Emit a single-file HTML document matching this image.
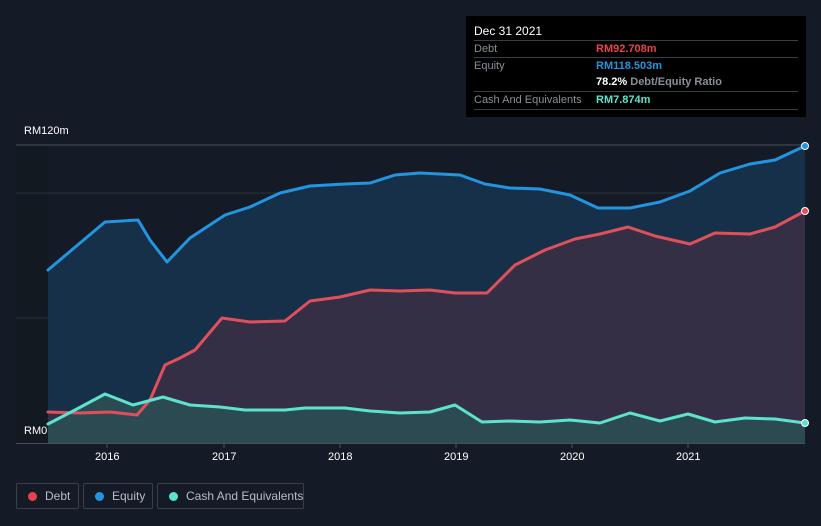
<!DOCTYPE html>
<html><head><style>
body{margin:0;width:821px;height:526px;background:#151b26;font-family:"Liberation Sans",sans-serif;overflow:hidden;position:relative}
.tt{position:absolute;left:466px;top:16px;width:340px;height:101px;background:#000}
.tt .h{position:absolute;left:8px;top:8px;color:#fff;font-size:12px}
.row{position:absolute;left:8px;width:324px;border-top:1px solid #3a3d44;height:17px;font-size:11px;color:#8a8f98;white-space:nowrap}
.row span{position:absolute;left:122px;top:2px;font-weight:bold}
.row .l{position:absolute;left:0;top:2px}
.lg{position:absolute;top:483px;height:26px;border:1px solid #3a3f4a;border-radius:2px;color:#b8bcc4;font-size:12px;line-height:24px;box-sizing:border-box;white-space:nowrap}
.lg i{position:absolute;left:11px;top:8px;width:9px;height:9px;border-radius:50%}
.ax{position:absolute;color:#fff;font-size:11px}
</style></head><body>
<svg width="821" height="526" style="position:absolute;left:0;top:0">
<rect x="16" y="145" width="32" height="298" fill="#131920"/>
<line x1="16" y1="145" x2="805" y2="145" fill="none" stroke="#4a505a" stroke-width="1"/>
<line x1="16" y1="193" x2="805" y2="193" stroke="#2a303a"/>
<line x1="16" y1="318" x2="805" y2="318" stroke="#2a303a"/>
<path d="M48,270 L80,243 105,222 138,220 150,240 167,262 190,238 225,215 250,207 280,193 310,186 345,184 370,183 395,175 420,173 460,175 485,184 510,188 540,189 570,195 598,208 630,208 660,202 690,191 720,173 750,164 775,160 805,146 L805,443 L48,443Z" fill="#17304a"/>
<path d="M48,412 L80,413 110,412 137,415 150,400 165,365 180,358 195,350 222,318 250,322 285,321 310,301 340,297 370,290 400,291 430,290 455,293 487,293 515,265 545,250 575,239 600,234 628,227 655,236 690,244 715,233 750,234 775,227 805,211 L805,443 L48,443Z" fill="#352f45"/>
<path d="M48,424 L75,410 105,394 133,405 163,397 190,405 220,407 245,410 285,410 305,408 345,408 370,411 400,413 430,412 455,405 482,422 510,421 540,422 570,420 600,423 630,413 660,421 688,414 715,422 745,418 775,419 805,423 L805,443 L48,443Z" fill="#2c4a52"/>
<g fill="none" stroke-width="3" stroke-linejoin="round" stroke-linecap="round">
<polyline stroke="#2394df" points="48,270 80,243 105,222 138,220 150,240 167,262 190,238 225,215 250,207 280,193 310,186 345,184 370,183 395,175 420,173 460,175 485,184 510,188 540,189 570,195 598,208 630,208 660,202 690,191 720,173 750,164 775,160 805,146"/>
<polyline stroke="#e0505c" points="48,412 80,413 110,412 137,415 150,400 165,365 180,358 195,350 222,318 250,322 285,321 310,301 340,297 370,290 400,291 430,290 455,293 487,293 515,265 545,250 575,239 600,234 628,227 655,236 690,244 715,233 750,234 775,227 805,211"/>
<polyline stroke="#5de3cd" points="48,424 75,410 105,394 133,405 163,397 190,405 220,407 245,410 285,410 305,408 345,408 370,411 400,413 430,412 455,405 482,422 510,421 540,422 570,420 600,423 630,413 660,421 688,414 715,422 745,418 775,419 805,423"/>
</g>
<line x1="16" y1="443.5" x2="805" y2="443.5" stroke="#4a505a"/>
<g stroke="#4a505a"><line x1="107" y1="443" x2="107" y2="448"/><line x1="224" y1="443" x2="224" y2="448"/><line x1="340" y1="443" x2="340" y2="448"/><line x1="456" y1="443" x2="456" y2="448"/><line x1="572" y1="443" x2="572" y2="448"/><line x1="688" y1="443" x2="688" y2="448"/></g>
<circle cx="805" cy="146" r="3.5" fill="#2394df" stroke="#fff" stroke-width="1"/>
<circle cx="805" cy="211" r="3.5" fill="#e0505c" stroke="#fff" stroke-width="1"/>
<circle cx="805" cy="423" r="3.5" fill="#5de3cd" stroke="#fff" stroke-width="1"/>
</svg>
<div class="ax" style="left:24px;top:125px">RM120m</div>
<div class="ax" style="left:24px;top:425px">RM0</div>
<div class="ax" style="left:95px;top:451px">2016</div>
<div class="ax" style="left:212px;top:451px">2017</div>
<div class="ax" style="left:328px;top:451px">2018</div>
<div class="ax" style="left:444px;top:451px">2019</div>
<div class="ax" style="left:560px;top:451px">2020</div>
<div class="ax" style="left:676px;top:451px">2021</div>
<div class="tt">
<div class="h">Dec 31 2021</div>
<div class="row" style="top:24px"><div class="l">Debt</div><span style="color:#e8434c">RM92.708m</span></div>
<div class="row" style="top:41px"><div class="l">Equity</div><span style="color:#2394df">RM118.503m</span></div>
<div class="row" style="top:58px;border-top:none"><span style="color:#fff">78.2% <b style="color:#8a8f98">Debt/Equity Ratio</b></span></div>
<div class="row" style="top:75px;border-bottom:1px solid #3a3d44"><div class="l">Cash And Equivalents</div><span style="color:#5de3cd">RM7.874m</span></div>
</div>
<div class="lg" style="left:16px;width:63px"><i style="background:#e8434c"></i><span style="position:absolute;left:28px">Debt</span></div>
<div class="lg" style="left:83px;width:70px"><i style="background:#2394df"></i><span style="position:absolute;left:28px">Equity</span></div>
<div class="lg" style="left:157px;width:147px"><i style="background:#5de3cd"></i><span style="position:absolute;left:28px">Cash And Equivalents</span></div>
</body></html>
